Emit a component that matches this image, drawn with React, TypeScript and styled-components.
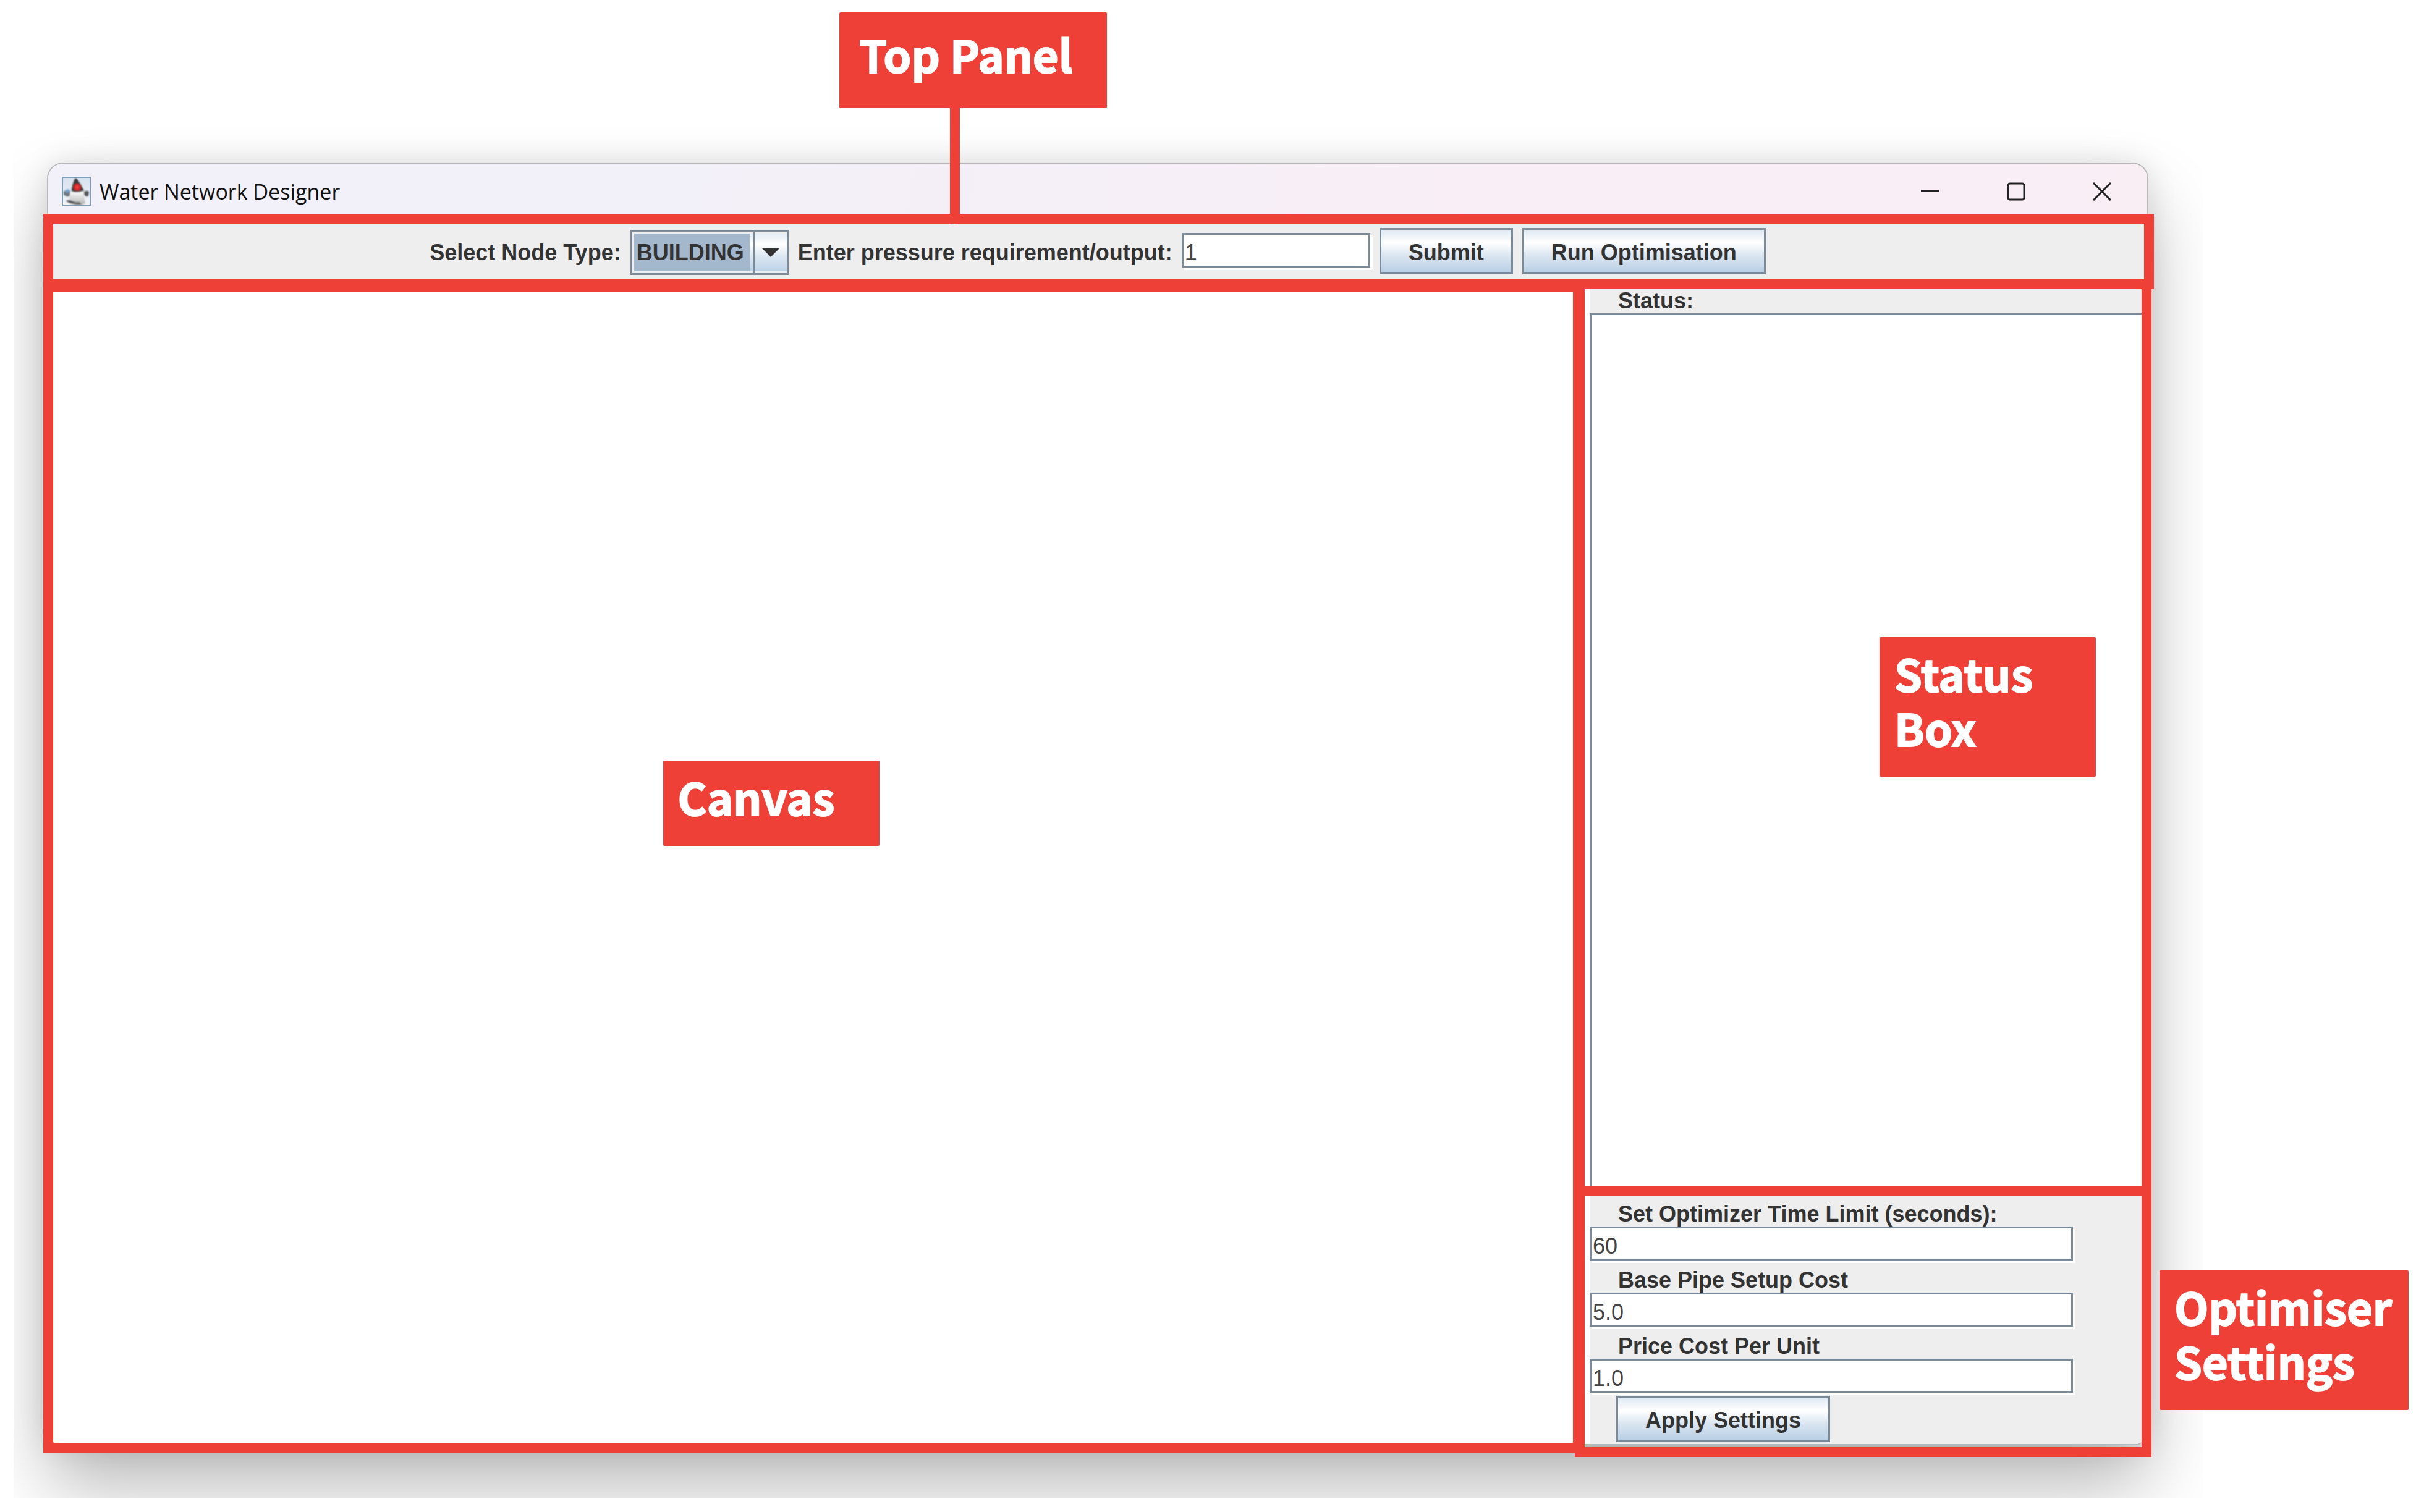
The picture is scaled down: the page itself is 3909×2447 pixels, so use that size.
import React from "react";
import styled, { createGlobalStyle } from "styled-components";

const RED = "#ef4037";
const STEEL = "#7a8a99";
const PANEL = "#eeeeee";
const INK = "#333333";

const GlobalStyle = createGlobalStyle`
  *, *::before, *::after { box-sizing: border-box; }
  body {
    margin: 0;
    background: #ffffff;
    font-family: "Liberation Sans", Arial, sans-serif;
    font-size: 36px;
    color: ${INK};
  }
`;

const Page = styled.main`
  display: flex;
  flex-direction: column;
  min-height: 100vh;
  padding: 265px 435px 110px 78px;
`;

const Window = styled.section`
  position: relative;
  flex: 1;
  display: flex;
  flex-direction: column;

  &::before {
    content: "";
    position: absolute;
    inset: 0;
    border-radius: 24px 24px 20px 20px;
    box-shadow: 0 0 0 2px #b9b9b9, 0 65px 120px rgba(0, 0, 0, 0.29),
      0 0 50px rgba(0, 0, 0, 0.12);
    clip-path: inset(-75px -90px -87px -56px);
  }
`;

const TitleBar = styled.header`
  position: relative;
  display: flex;
  align-items: center;
  height: 81px;
  padding: 8px 58px 0 22px;
  gap: 14px;
  border-radius: 24px 24px 0 0;
  background: linear-gradient(100deg, #f2f0f8 30%, #f9eef6 70%, #f9eef4);
`;

const Title = styled.h1`
  flex: 1;
  margin: 0;
  font: 400 34px/48px "Open Sans", "Noto Sans", sans-serif;
  color: #111111;
`;

const WindowControls = styled.div`
  display: flex;
  gap: 109px;
`;

const WindowButton = styled.button`
  display: flex;
  padding: 0;
  border: 0;
  background: none;
  color: #222222;
`;

const Toolbar = styled.form`
  position: relative;
  display: flex;
  justify-content: center;
  align-items: baseline;
  gap: 15px;
  height: 114px;
  padding-top: 23px;
  background: ${PANEL};
`;

const ToolbarFrame = styled.div`
  position: absolute;
  top: 81px;
  left: -8px;
  right: -11px;
  height: 122px;
  border: 16px solid ${RED};
  pointer-events: none;
`;

const FieldLabel = styled.label`
  padding-top: 4px;
  font-weight: 700;
  line-height: 40px;
  white-space: nowrap;
`;

const Combo = styled.div`
  display: grid;
  grid-template-columns: 195px 55px;
  height: 73px;
  border: 3px solid ${STEEL};
  background: linear-gradient(#dde8f3, #ffffff 30%, #dbe6f1 60%, #b8cfe5);
`;

const ComboSelect = styled.select`
  grid-area: 1 / 1 / 2 / 3;
  appearance: none;
  margin: 0;
  padding: 0 55px 0 4px;
  border: 3px solid #eeeeee;
  border-right: 0;
  border-radius: 0;
  background: linear-gradient(#a3b8cc, #a3b8cc) 0 0 / 187px 100% no-repeat;
  font: 700 36px/44px "Liberation Sans", Arial, sans-serif;
  color: ${INK};
`;

const ComboArrow = styled.span`
  grid-area: 1 / 2 / 2 / 3;
  display: flex;
  align-items: center;
  justify-content: center;
  border-left: 3px solid ${STEEL};
  pointer-events: none;
`;

const TextField = styled.input<{ $width: number }>`
  width: ${(p) => p.$width}px;
  height: 56px;
  padding: 8px 2px 0;
  border: 3px solid ${STEEL};
  border-radius: 0;
  background: #ffffff;
  box-shadow: 4px 4px 0 #ffffff;
  font: 400 36px "Liberation Sans", Arial, sans-serif;
  color: #444444;
`;

const MetalButton = styled.button`
  height: 75px;
  padding: 4px 44px 0;
  border: 3px solid ${STEEL};
  border-radius: 0;
  background: linear-gradient(#dde8f3, #ffffff 30%, #dbe6f1 60%, #b8cfe5);
  font: 700 36px/44px "Liberation Sans", Arial, sans-serif;
  color: ${INK};
  white-space: nowrap;
`;

const Workspace = styled.div`
  position: relative;
  flex: 1;
  display: grid;
  grid-template-columns: minmax(0, 1fr) 922px;
`;

const CanvasPane = styled.section`
  position: relative;
  background: #ffffff;
  border-radius: 0 0 0 20px;
`;

const SideColumn = styled.aside`
  display: flex;
  flex-direction: column;
`;

const StatusPane = styled.section`
  position: relative;
  flex: 1;
  display: flex;
  padding-left: 20px;
  background: #ffffff;
`;

const StatusBody = styled.div`
  flex: 1;
  display: flex;
  flex-direction: column;
  padding-top: 3px;
  background: ${PANEL};
`;

const StatusLabel = styled(FieldLabel)`
  padding-left: 46px;
`;

const StatusText = styled.textarea`
  flex: 1;
  width: 100%;
  border: solid ${STEEL};
  border-width: 3px 0 0 3px;
  border-radius: 0;
  background: #ffffff;
  resize: none;
  font: 400 36px "Liberation Sans", Arial, sans-serif;
`;

const SettingsPane = styled.section`
  position: relative;
  padding-left: 20px;
  border-radius: 0 0 20px 0;
  background: #ffffff;
`;

const SettingsForm = styled.form`
  display: flex;
  flex-direction: column;
  gap: 8px;
  padding: 13px 0 3px;
  border-radius: 0 0 20px 0;
  background: ${PANEL};
`;

const SettingRow = styled.div`
  display: flex;
  flex-direction: column;
  align-items: flex-start;

  label { padding-left: 46px; }
  input { height: 55px; }
`;

const SettingsActions = styled.div`
  display: flex;
  padding-left: 43px;
  margin-top: -3px;
`;

const Frame = styled.div<{ $inset: string; $border?: string }>`
  position: absolute;
  inset: ${(p) => p.$inset};
  border: solid ${RED};
  border-width: ${(p) => p.$border ?? "16px"};
  pointer-events: none;
`;

const Callout = styled.div<{ $width: number; $pad: string }>`
  position: absolute;
  width: ${(p) => p.$width}px;
  padding: ${(p) => p.$pad};
  border-radius: 2px;
  background: ${RED};
  color: #ffffff;
  font: 700 72px/88px "Noto Sans CJK SC", "Noto Sans", sans-serif;
  -webkit-text-stroke: 2px #ffffff;
`;

const TopCallout = styled(Callout)`
  top: -245px;
  left: 37.7%;

  &::after {
    content: "";
    position: absolute;
    top: 100%;
    left: 179px;
    width: 16px;
    height: 188px;
    border-radius: 0 0 8px 8px;
    background: ${RED};
  }
`;

const CanvasCallout = styled(Callout)`
  top: 41.1%;
  left: 40.2%;
`;

const StatusCallout = styled(Callout)`
  top: 38.9%;
  right: 83px;
`;

const SettingsCallout = styled(Callout)`
  top: 128px;
  left: calc(100% + 20px);
`;

const DukeIcon = () => (
  <svg width="47" height="47" viewBox="0 0 47 47" aria-hidden="true">
    <defs>
      <linearGradient id="sky" x1="0" y1="0" x2="0" y2="1">
        <stop offset="0" stopColor="#d5e2ee" />
        <stop offset="1" stopColor="#f4f4f8" />
      </linearGradient>
      <linearGradient id="body" x1="0" y1="0" x2="0" y2="1">
        <stop offset="0" stopColor="#ffffff" />
        <stop offset="1" stopColor="#b9b9b9" />
      </linearGradient>
      <radialGradient id="nose">
        <stop offset="0" stopColor="#ff4a44" />
        <stop offset="1" stopColor="#c01a1e" />
      </radialGradient>
      <filter id="soft"><feGaussianBlur stdDeviation="0.8" /></filter>
    </defs>
    <rect x="1" y="1" width="45" height="45" fill="url(#sky)" stroke="#7f9db5" strokeWidth="2" />
    <g filter="url(#soft)">
      <path d="M6 39 Q20 34 38 43 L30 45 Q14 45 6 39Z" fill="#55585c" />
      <path d="M3 24 Q8 19 14 23 L14 31 Q7 34 3 29Z" fill="#71777e" />
      <path d="M36 25 Q41 20 44 25 L43 31 Q39 34 36 29Z" fill="#55585c" />
      <path d="M5 22 l6 -2 l3 4 l-7 2Z" fill="#6fa3d0" />
      <path d="M22 2 Q27 4 36 23 L34 29 L15 27 Q17 9 22 2Z" fill="#3b3b3d" />
      <path d="M14 23 Q23 27 35 23 L38 43 Q31 45 28 41 Q20 42 12 37 Z" fill="url(#body)" />
      <circle cx="25" cy="17" r="6" fill="url(#nose)" />
    </g>
  </svg>
);

const settings = [
  { id: "time-limit", label: "Set Optimizer Time Limit (seconds):", value: "60" },
  { id: "pipe-cost", label: "Base Pipe Setup Cost", value: "5.0" },
  { id: "unit-cost", label: "Price Cost Per Unit", value: "1.0" },
];

export default function App() {
  return (
    <Page>
      <GlobalStyle />
      <Window>
        <TitleBar>
          <DukeIcon />
          <Title>Water Network Designer</Title>
          <WindowControls>
            <WindowButton type="button" aria-label="Minimise">
              <svg width="30" height="30" viewBox="0 0 30 30">
                <path d="M0 14H30" stroke="currentColor" strokeWidth="3" />
              </svg>
            </WindowButton>
            <WindowButton type="button" aria-label="Maximise">
              <svg width="30" height="30" viewBox="0 0 30 30" fill="none">
                <rect x="2" y="2" width="26" height="26" rx="3" stroke="currentColor" strokeWidth="3" />
              </svg>
            </WindowButton>
            <WindowButton type="button" aria-label="Close">
              <svg width="30" height="30" viewBox="0 0 30 30">
                <path d="M1 1L29 29M29 1L1 29" stroke="currentColor" strokeWidth="3" />
              </svg>
            </WindowButton>
          </WindowControls>
        </TitleBar>

        <Toolbar onSubmit={(e) => e.preventDefault()}>
          <FieldLabel htmlFor="node-type">Select Node Type:</FieldLabel>
          <Combo>
            <ComboSelect id="node-type" defaultValue="BUILDING">
              <option>BUILDING</option>
            </ComboSelect>
            <ComboArrow>
              <svg width="30" height="15" viewBox="0 0 30 15">
                <path d="M0 0H30L15 15Z" fill={INK} />
              </svg>
            </ComboArrow>
          </Combo>
          <FieldLabel htmlFor="pressure">Enter pressure requirement/output:</FieldLabel>
          <TextField id="pressure" type="text" $width={305} defaultValue="1" />
          <MetalButton type="submit">Submit</MetalButton>
          <MetalButton type="button">Run Optimisation</MetalButton>
        </Toolbar>

        <Workspace>
          <CanvasPane aria-label="Canvas">
            <Frame $inset="-7px -12px -15px -8px" $border="19px 19px 17px 16px" />
            <CanvasCallout $width={350} $pad="14px 24px 36px">Canvas</CanvasCallout>
          </CanvasPane>
          <SideColumn>
            <StatusPane>
              <StatusBody>
                <StatusLabel htmlFor="status">Status:</StatusLabel>
                <StatusText id="status" readOnly />
              </StatusBody>
              <Frame $inset="-8px -7px -8px -4px" />
              <StatusCallout $width={350} $pad="14px 24px 36px">Status Box</StatusCallout>
            </StatusPane>
            <SettingsPane>
              <SettingsForm onSubmit={(e) => e.preventDefault()}>
                {settings.map((s) => (
                  <SettingRow key={s.id}>
                    <FieldLabel htmlFor={s.id}>{s.label}</FieldLabel>
                    <TextField id={s.id} type="text" $width={782} defaultValue={s.value} />
                  </SettingRow>
                ))}
                <SettingsActions>
                  <MetalButton type="submit">Apply Settings</MetalButton>
                </SettingsActions>
              </SettingsForm>
              <Frame $inset="-8px -7px -21px -4px" />
              <SettingsCallout $width={403} $pad="14px 24px 36px">Optimiser Settings</SettingsCallout>
            </SettingsPane>
          </SideColumn>
        </Workspace>
        <ToolbarFrame />
        <TopCallout $width={433} $pad="23px 32px 44px">Top Panel</TopCallout>
      </Window>
    </Page>
  );
}
